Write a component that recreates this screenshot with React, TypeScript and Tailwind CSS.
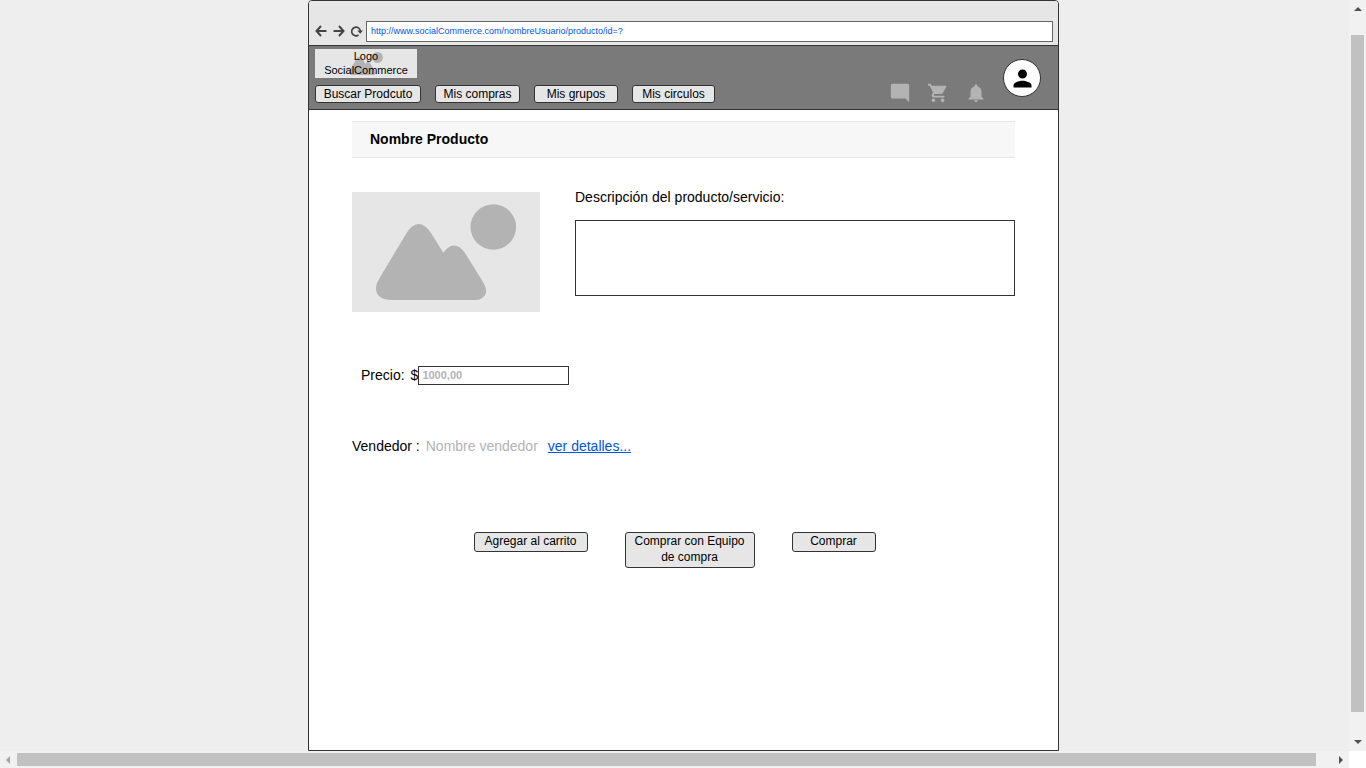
import React from "react";
import { MdModeComment, MdNotifications, MdPerson, MdShoppingCart } from "react-icons/md";

function Placeholder({ className }: { className: string }) {
  return (
    <svg viewBox="0 0 188 120" className={className} aria-hidden="true">
      <circle cx="141.3" cy="35" r="22.8" fill="#b3b3b3" />
      <path
        d="M27 87L54 42Q60 32 66.500 32Q73 32 79 41L91.500 61Q96 53.500 102 53.500Q108 53.500 113 61L131 90Q136 99 133 103Q130 108 123 108H38Q24 107 24 96Q24 92 27 87Z"
        fill="#b3b3b3"
      />
    </svg>
  );
}

function ToolButton({ label, children }: { label: string; children: React.ReactNode }) {
  return (
    <button type="button" aria-label={label} className="flex size-3 items-center justify-center">
      <svg viewBox="0 0 12 12" className="size-3" fill="none" stroke="#444" strokeWidth="2">
        {children}
      </svg>
    </button>
  );
}

const navItems = [
  { label: "Buscar Prodcuto", width: "w-[106px]" },
  { label: "Mis compras", width: "w-[85px]" },
  { label: "Mis grupos", width: "w-[84px]" },
  { label: "Mis circulos", width: "w-[83px]" },
];

const actions = [
  { label: "Agregar al carrito", width: "w-[114px]" },
  { label: "Comprar con Equipo de compra", width: "w-[130px]" },
  { label: "Comprar", width: "w-[84px]" },
];

const iconLinks = [
  { label: "Mensajes", Icon: MdModeComment },
  { label: "Carrito", Icon: MdShoppingCart },
  { label: "Notificaciones", Icon: MdNotifications },
];

function BrowserBar() {
  return (
    <div className="flex items-center bg-[#e6e6e6] pt-5 pr-[5px] pb-[3px] pl-[6px]">
      <div className="flex gap-[6px] pb-[2px]">
        <ToolButton label="Atrás">
          <path d="M6 1L1.500 6L6 11M1.500 6H11.500" />
        </ToolButton>
        <ToolButton label="Adelante">
          <path d="M6 1L10.500 6L6 11M10.500 6H0.500" />
        </ToolButton>
        <ToolButton label="Recargar">
          <path d="M7.500 10A4.300 4.300 0 1 1 9.300 6" strokeWidth="1.700" />
          <path d="M6.300 5.500H12L9.200 8.800Z" fill="#444" stroke="none" />
        </ToolButton>
      </div>
      <input
        aria-label="Dirección"
        defaultValue="http://www.socialCommerce.com/nombreUsuario/producto/id=?"
        className="ml-[3px] h-[21px] min-w-0 flex-1 border border-[#666] bg-white px-1 pb-[2px] text-[9px] text-[#0057d8] outline-none"
      />
    </div>
  );
}

function SiteHeader() {
  return (
    <header className="flex items-end justify-between border-y border-[#333] bg-[#7a7a7a] pt-[3px] pr-[17px] pb-[5px] pl-[6px]">
      <div className="pb-px">
        <a
          href="#"
          className="relative flex h-[29px] w-[102px] items-center justify-center bg-[#e6e6e6] text-center text-[11px] leading-[14px]"
        >
          <Placeholder className="absolute inset-0 size-full" />
          <span className="relative pb-px">
            Logo
            <br />
            SocialCommerce
          </span>
        </a>
        <nav className="mt-[7px] flex gap-[14px]">
          {navItems.map((item) => (
            <button
              key={item.label}
              type="button"
              className={`h-[18px] rounded-[3px] border border-[#333] bg-[#e6e6e6] text-[12px] leading-4 ${item.width}`}
            >
              {item.label}
            </button>
          ))}
        </nav>
      </div>
      <div className="flex items-end gap-4">
        {iconLinks.map(({ label, Icon }) => (
          <button key={label} type="button" aria-label={label} className="text-[#b3b3b3]">
            <Icon size={22} />
          </button>
        ))}
        <button
          type="button"
          aria-label="Perfil"
          className="mb-[7px] flex size-[38px] items-center justify-center rounded-full border border-[#333] bg-white text-black"
        >
          <MdPerson size={27} />
        </button>
      </div>
    </header>
  );
}

function Product() {
  return (
    <main className="flex-1 px-[43px] pt-[11px] text-[14px] leading-5">
      <h1 className="border-y border-[#e6e6e6] bg-[#f7f7f7] px-[18px] py-2 leading-[19px] font-bold">
        Nombre Producto
      </h1>
      <section className="mt-[34px] flex gap-[35px]">
        <div className="h-[120px] w-[188px] shrink-0 bg-[#e6e6e6]">
          <Placeholder className="size-full" />
        </div>
        <div className="flex-1">
          <label htmlFor="descripcion" className="mt-[-5px] block">
            Descripción del producto/servicio:
          </label>
          <textarea
            id="descripcion"
            className="mt-[13px] block h-[76px] w-full resize-none border border-[#333] bg-white p-1 outline-none"
          />
        </div>
      </section>
      <div className="mt-[53px] flex items-center pl-[9px]">
        <label htmlFor="precio" className="flex gap-[6px]">
          <span>Precio:</span>
          <span>$</span>
        </label>
        <input
          id="precio"
          placeholder="1000,00"
          className="h-[19px] w-[151px] border border-[#333] bg-white px-[3px] text-[11px] font-bold outline-none placeholder:text-[#b3b3b3]"
        />
      </div>
      <p className="mt-[51px] flex">
        <span>Vendedor :</span>
        <span className="ml-[6px] text-[#b3b3b3]">Nombre vendedor</span>
        <a href="#" className="ml-[10px] text-[#0057d8] underline">
          ver detalles...
        </a>
      </p>
      <div className="mt-[76px] flex items-start justify-center gap-[37px] pr-[18px]">
        {actions.map((action) => (
          <button
            key={action.label}
            type="button"
            className={`rounded-[3px] border border-[#333] bg-[#e6e6e6] px-1 pb-[2px] text-[12px] leading-4 ${action.width}`}
          >
            {action.label}
          </button>
        ))}
      </div>
    </main>
  );
}

function Arrow({ points, color }: { points: string; color: string }) {
  return (
    <svg viewBox="0 0 17 17" className="size-[17px] shrink-0" aria-hidden="true">
      <polygon points={points} fill={color} />
    </svg>
  );
}

export default function App() {
  return (
    <div className="flex h-screen flex-col bg-[#eee] font-['Liberation_Sans',Arial,sans-serif] text-black">
      <div className="flex min-h-0 flex-1">
        <div className="flex flex-1 justify-center overflow-hidden pl-[18px]">
          <div className="flex w-full max-w-[751px] flex-col overflow-hidden rounded-t-[4px] border border-[#333] bg-white">
            <BrowserBar />
            <SiteHeader />
            <Product />
          </div>
        </div>
        <div className="flex w-[17px] flex-col items-center bg-[#f1f1f1]">
          <Arrow points="5,11 13,11 9,7" color="#505050" />
          <div className="flex w-full flex-1 flex-col items-center pt-[18px] pb-[22px]">
            <div className="w-[13px] flex-1 bg-[#c1c1c1]" />
          </div>
          <Arrow points="5,6 13,6 9,10" color="#505050" />
        </div>
      </div>
      <div className="flex h-[17px]">
        <div className="flex flex-1 items-center bg-[#f1f1f1]">
          <Arrow points="10,5 10,13 6,9" color="#a3a3a3" />
          <div className="mr-4 h-[13px] flex-1 bg-[#c1c1c1]" />
          <Arrow points="7,5 7,13 11,9" color="#505050" />
        </div>
        <div className="w-[17px] bg-white" />
      </div>
    </div>
  );
}
